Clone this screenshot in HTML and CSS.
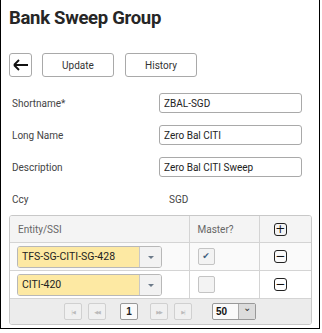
FILE: index.html
```html
<!DOCTYPE html>
<html>
<head>
    <title>Bank Sweep Group</title>
    <link rel="stylesheet" href="styles.css">
</head>
<body>
    <div class="frame">
        <h1>Bank Sweep Group</h1>

        <!-- Toolbar -->
        <div class="toolbar">
            <button class="btn back">
                <svg width="16" height="12" viewBox="0 0 16 12"><path d="M1 6H15M1 6L6 1M1 6L6 11" stroke="#111" stroke-width="1.8" fill="none"/></svg>
            </button>
            <button class="btn wide">Update</button>
            <button class="btn wide">History</button>
        </div>

        <!-- Form -->
        <div class="form">
            <label>Shortname*</label>
            <input type="text" value="ZBAL-SGD">
            <label>Long Name</label>
            <input type="text" value="Zero Bal CITI">
            <label>Description</label>
            <input type="text" value="Zero Bal CITI Sweep">
            <label>Ccy</label>
            <span class="value">SGD</span>
        </div>

        <!-- Grid -->
        <div class="grid">
            <table>
                <colgroup>
                    <col class="c1">
                    <col class="c2">
                    <col class="c3">
                </colgroup>
                <thead>
                    <tr>
                        <th>Entity/SSI</th>
                        <th>Master?</th>
                        <th class="center"><span class="icon-btn">+</span></th>
                    </tr>
                </thead>
                <tbody>
                    <tr class="odd">
                        <td><div class="combo"><span class="combo-text">TFS-SG-CITI-SG-428</span><span class="combo-arrow"></span></div></td>
                        <td><span class="check">&#10004;</span></td>
                        <td class="center"><span class="icon-btn">&minus;</span></td>
                    </tr>
                    <tr>
                        <td><div class="combo"><span class="combo-text">CITI-420</span><span class="combo-arrow"></span></div></td>
                        <td><span class="check"></span></td>
                        <td class="center"><span class="icon-btn">&minus;</span></td>
                    </tr>
                </tbody>
            </table>
            <div class="pager">
                <span class="pg dim">|&#9664;</span>
                <span class="pg dim">&#9664;&#9664;</span>
                <span class="pg page">1</span>
                <span class="pg dim gap">&#9654;&#9654;</span>
                <span class="pg dim">&#9654;|</span>
                <span class="size"><span class="size-num">50</span><span class="size-arrow">&#8964;</span></span>
            </div>
        </div>
    </div>
</body>
</html>
```

FILE: styles.css
```css
body {
    margin: 0;
    padding: 0;
    font-family: Roboto, Arial, sans-serif;
    background: #fff;
}

.frame {
    width: 318px;
    height: 328px;
    border: 1px solid #000;
    border-top: none;
}

h1 {
    margin: 0;
    padding: 5px 0 0 8px;
    font-size: 18.5px;
    font-weight: bold;
    color: #262626;
    line-height: 26px;
    letter-spacing: -0.3px;
}

/* Toolbar */
.toolbar {
    display: flex;
    align-items: center;
    margin: 22px 0 0 8px;
    gap: 10px;
}

.btn {
    height: 24px;
    border: 1px solid #a9a9a9;
    border-radius: 3px;
    background: #fff;
    font-family: Roboto, Arial, sans-serif;
    font-size: 10px;
    color: #333;
    padding: 0;
}

.back {
    width: 23px;
    display: flex;
    align-items: center;
    justify-content: center;
}

.wide {
    width: 72px;
}

.wide + .wide {
    margin-left: 1px;
}

/* Form */
.form {
    display: grid;
    grid-template-columns: 147px 143px;
    grid-auto-rows: 32px;
    align-items: center;
    margin: 10px 0 0 11px;
}

.form label {
    font-size: 10px;
    color: #444;
}

.form input {
    height: 20px;
    box-sizing: border-box;
    border: 1px solid #a9a9a9;
    border-radius: 3px;
    padding: 0 4px;
    font-family: Roboto, Arial, sans-serif;
    font-size: 10px;
    color: #222;
}

.form .value {
    font-size: 10px;
    color: #444;
    padding-left: 10px;
}

/* Grid */
.grid {
    margin: 0 0 0 8px;
    width: 301px;
    border: 1px solid #c8c8c8;
    border-radius: 3px;
    overflow: hidden;
}

table {
    width: 100%;
    table-layout: fixed;
    border-collapse: collapse;
    font-family: Roboto, Arial, sans-serif;
    font-size: 10px;
}

.c1 { width: 179px; }
.c2 { width: 70px; }

th {
    height: 26px;
    background: #f4f4f4;
    color: #666;
    font-weight: normal;
    text-align: left;
    padding: 0 0 0 8px;
    border-bottom: 1px solid #d4d4d4;
}

th + th, td + td {
    border-left: 1px solid #d4d4d4;
}

td {
    height: 27px;
    padding: 0 0 0 7px;
    border-bottom: 1px solid #d4d4d4;
}

th.center, td.center {
    text-align: center;
    padding: 0 10px 0 0;
}

tr.odd td {
    background: #fafafa;
}

.combo {
    display: flex;
    width: 143px;
    height: 20px;
    border: 1px solid #b8b8b8;
    border-radius: 3px;
    overflow: hidden;
}

.combo-text {
    flex: 1;
    background: #fde9a3;
    color: #222;
    font-size: 10.5px;
    line-height: 20px;
    padding-left: 4px;
}

.combo-arrow {
    width: 21px;
    background: #f2f2f2;
    border-left: 1px solid #c8c8c8;
    position: relative;
}

.combo-arrow::after {
    content: "";
    position: absolute;
    left: 8px;
    top: 9px;
    border-left: 3px solid transparent;
    border-right: 3px solid transparent;
    border-top: 3px solid #6c7a89;
}

.check {
    display: inline-block;
    width: 15px;
    height: 15px;
    border: 1px solid #c4c4c4;
    border-radius: 2px;
    background: #f3f3f3;
    color: #3f5f80;
    font-size: 9px;
    line-height: 15px;
    text-align: center;
    margin-left: 1px;
    vertical-align: middle;
    font-family: "DejaVu Sans", sans-serif;
}

.icon-btn {
    display: inline-block;
    width: 11px;
    height: 11px;
    border: 1px solid #222;
    border-radius: 3px;
    font-size: 12px;
    line-height: 10px;
    color: #111;
    text-align: center;
    vertical-align: middle;
    font-family: "DejaVu Sans", sans-serif;
}

/* Pager */
.pager {
    height: 25px;
    background: #ececec;
    display: flex;
    align-items: center;
    padding-left: 54px;
    gap: 6px;
}

.pg {
    width: 16px;
    height: 15px;
    border: 1px solid #d0d0d0;
    border-radius: 2px;
    background: #f0f0f0;
    font-size: 5px;
    color: #bbb;
    display: flex;
    align-items: center;
    justify-content: center;
    font-family: "DejaVu Sans", sans-serif;
    letter-spacing: -1px;
}

.pg.page {
    margin-left: 8px;
    border-color: #999;
    background: #fafafa;
    color: #222;
    font-size: 10px;
    font-weight: bold;
    letter-spacing: 0;
    font-family: "Liberation Sans", Arial, sans-serif;
}

.pg.gap {
    margin-left: 6px;
}

.size {
    display: flex;
    margin-left: 14px;
    height: 15px;
    border: 1px solid #999;
    border-radius: 2px;
    overflow: hidden;
    background: #fafafa;
}

.size-num {
    width: 22px;
    font-family: "Liberation Sans", Arial, sans-serif;
    font-size: 10px;
    font-weight: bold;
    color: #111;
    line-height: 15px;
    padding-left: 3px;
}

.size-arrow {
    width: 16px;
    background: #dcdcdc;
    border-left: 1px solid #aaa;
    font-size: 10px;
    text-align: center;
    line-height: 8px;
    color: #333;
}
```
